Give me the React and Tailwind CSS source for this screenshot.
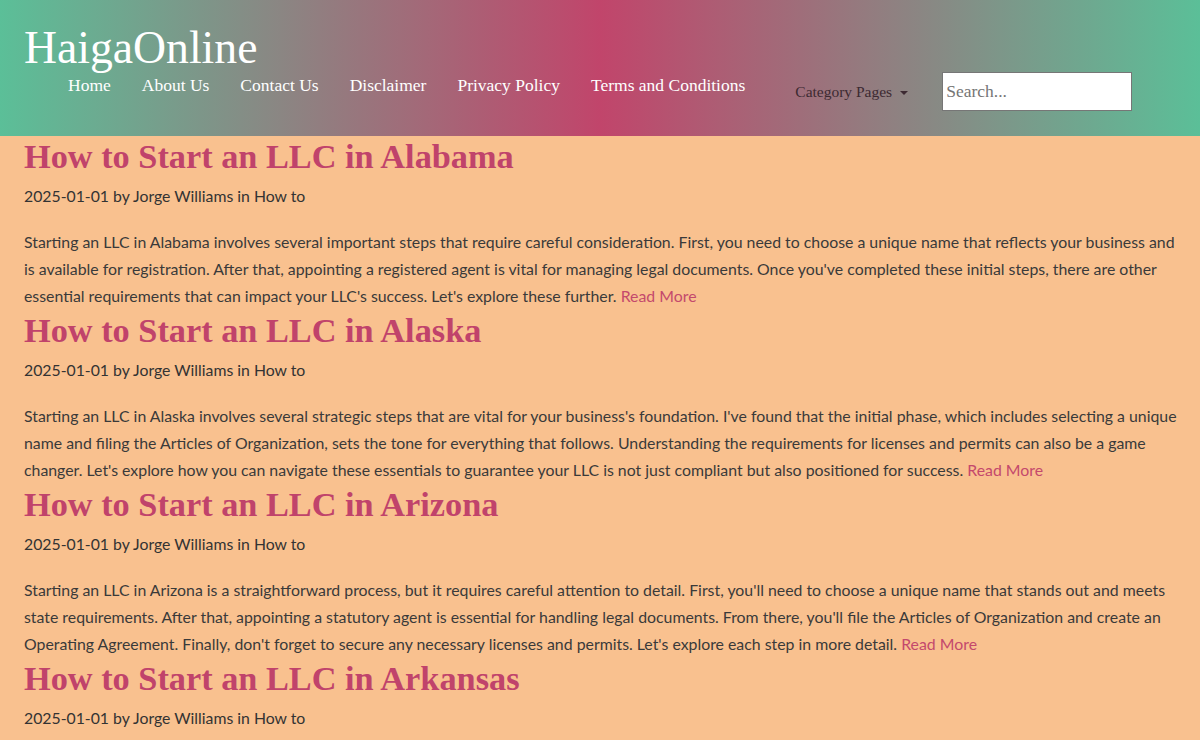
import React from "react";

const posts = [
  {
    title: "How to Start an LLC in Alabama",
    body: "Starting an LLC in Alabama involves several important steps that require careful consideration. First, you need to choose a unique name that reflects your business and is available for registration. After that, appointing a registered agent is vital for managing legal documents. Once you've completed these initial steps, there are other essential requirements that can impact your LLC's success. Let's explore these further.",
  },
  {
    title: "How to Start an LLC in Alaska",
    body: "Starting an LLC in Alaska involves several strategic steps that are vital for your business's foundation. I've found that the initial phase, which includes selecting a unique name and filing the Articles of Organization, sets the tone for everything that follows. Understanding the requirements for licenses and permits can also be a game changer. Let's explore how you can navigate these essentials to guarantee your LLC is not just compliant but also positioned for success.",
  },
  {
    title: "How to Start an LLC in Arizona",
    body: "Starting an LLC in Arizona is a straightforward process, but it requires careful attention to detail. First, you'll need to choose a unique name that stands out and meets state requirements. After that, appointing a statutory agent is essential for handling legal documents. From there, you'll file the Articles of Organization and create an Operating Agreement. Finally, don't forget to secure any necessary licenses and permits. Let's explore each step in more detail.",
  },
  {
    title: "How to Start an LLC in Arkansas",
    body: "Starting an LLC in Arkansas is a process that requires careful planning and attention to detail. You'll need to choose a unique name, appoint a registered agent, and file the Certificate of Organization with the state.",
  },
];

const navLinks = ["Home", "About Us", "Contact Us", "Disclaimer", "Privacy Policy", "Terms and Conditions"];

const serif = "font-['Liberation_Serif','DejaVu_Serif',serif]";

export default function App() {
  return (
    <div className="h-[740px] overflow-hidden bg-[#f9c18f] font-['Lato','Noto_Sans',sans-serif]">
      {/* Header */}
      <header className="h-[136px] bg-[linear-gradient(to_right,#5bbf98,#c1456b_50%,#5bbf98)] px-6 pt-[22px]">
        <div className={`${serif} text-[45.7px] leading-[52px] text-white`}>HaigaOnline</div>
        <div className="flex items-start pl-[44px]">
          <nav className={`${serif} -mt-[1px] flex gap-[31px] text-[17.5px] leading-6 text-white`}>
            {navLinks.map((l) => (
              <a key={l} href="#" className="whitespace-nowrap">
                {l}
              </a>
            ))}
          </nav>
          <button className={`${serif} ml-[50px] mt-[6px] flex items-center text-[15.5px] leading-6 text-[#3d2a32]`}>
            Category Pages
            <span className="ml-[8px] mt-px inline-block h-0 w-0 border-x-[4px] border-t-[4px] border-x-transparent border-t-[#3d2a32]" />
          </button>
          <input
            type="text"
            placeholder="Search..."
            className={`${serif} ml-[34px] -mt-[2px] h-[39px] w-[190px] border border-[#767676] bg-white px-[3px] text-[17.5px] text-[#333] placeholder:text-[#757575] outline-none`}
          />
        </div>
      </header>

      {/* Posts */}
      <main className="px-6 pt-px">
        {posts.map((p) => (
          <article key={p.title} className="pb-[2px]">
            <h2 className={`${serif} text-[34.3px] font-bold leading-[38px] text-[#c0436b]`}>
              <a href="#">{p.title}</a>
            </h2>
            <p className="mt-[7px] text-[15.8px] leading-[27px] text-[#333]">
              2025-01-01 by Jorge Williams in How to
            </p>
            <p className="-mr-1 mt-[19px] text-[15.85px] leading-[27px] text-[#3a3a3a]">
              {p.body}{" "}
              <a href="#" className="text-[#c4496c]">
                Read More
              </a>
            </p>
          </article>
        ))}
      </main>
    </div>
  );
}
